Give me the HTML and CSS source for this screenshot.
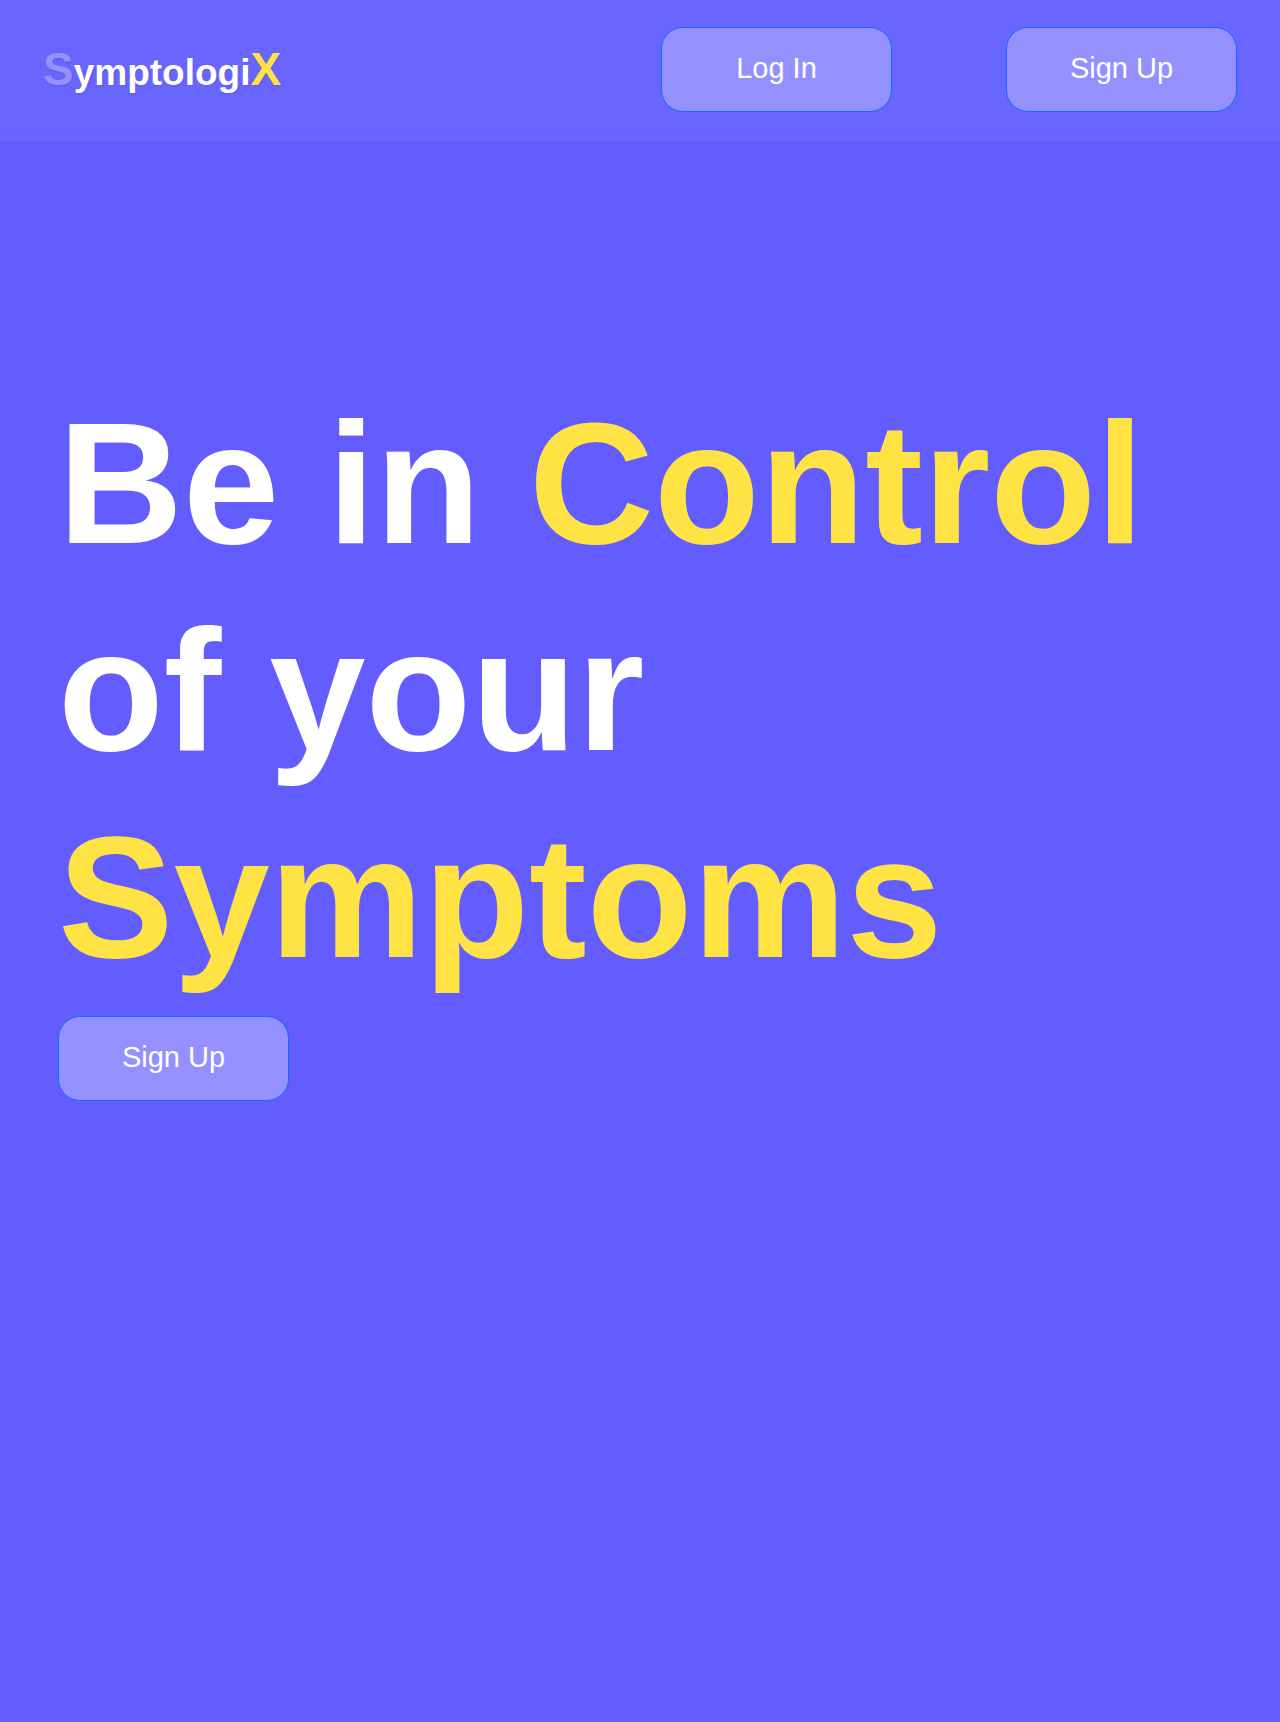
FILE: index.html
```html
<!DOCTYPE html>
<html lang="en">
<head>
<meta charset="utf-8">
<meta name="viewport" content="width=device-width, initial-scale=1">
<title>SymptologiX</title>
<link rel="stylesheet" href="styles.css">
</head>
<body>
<header class="navbar">
  <a class="brand" href="#"><span class="brand-start">S</span>ymptologi<span class="brand-end">X</span></a>
  <nav class="nav-actions">
    <button class="btn" type="button">Log In</button>
    <button class="btn" type="button">Sign Up</button>
  </nav>
</header>
<main class="hero">
  <h1 class="hero-title">Be in <span class="accent">Control</span><br>of your<br><span class="accent">Symptoms</span></h1>
  <button class="btn" type="button">Sign Up</button>
</main>
</body>
</html>
```

FILE: styles.css
```css
* {
  box-sizing: border-box;
}

body {
  margin: 0;
  min-height: 100vh;
  background: #635dff;
  color: #fff;
  font-family: "Liberation Sans", Arial, sans-serif;
}

.navbar {
  display: flex;
  align-items: center;
  justify-content: space-between;
  padding: 27px 43px 29px;
  background: #6965ff;
}

.brand {
  padding-top: 2px;
  color: #fff;
  font-size: 37px;
  font-weight: 700;
  line-height: 58px;
  text-decoration: none;
  text-shadow: 1px 1px 2px rgba(0, 0, 0, 0.1);
}

.brand-start,
.brand-end {
  font-size: 46px;
}

.brand-start {
  color: #9491ff;
}

.brand-end,
.accent {
  color: #ffe344;
}

.nav-actions {
  display: flex;
  gap: 114px;
}

.btn {
  width: 231px;
  height: 85px;
  padding: 0 0 2px;
  border: 1px solid #0d6efd;
  border-radius: 22px;
  background: #9491ff;
  color: #fff;
  font-family: inherit;
  font-size: 29px;
  cursor: pointer;
}

.hero {
  padding: 239px 58px 58px;
}

.hero-title {
  margin: 0 0 15px;
  font-size: 173px;
  font-weight: 700;
  line-height: 207px;
}
```
